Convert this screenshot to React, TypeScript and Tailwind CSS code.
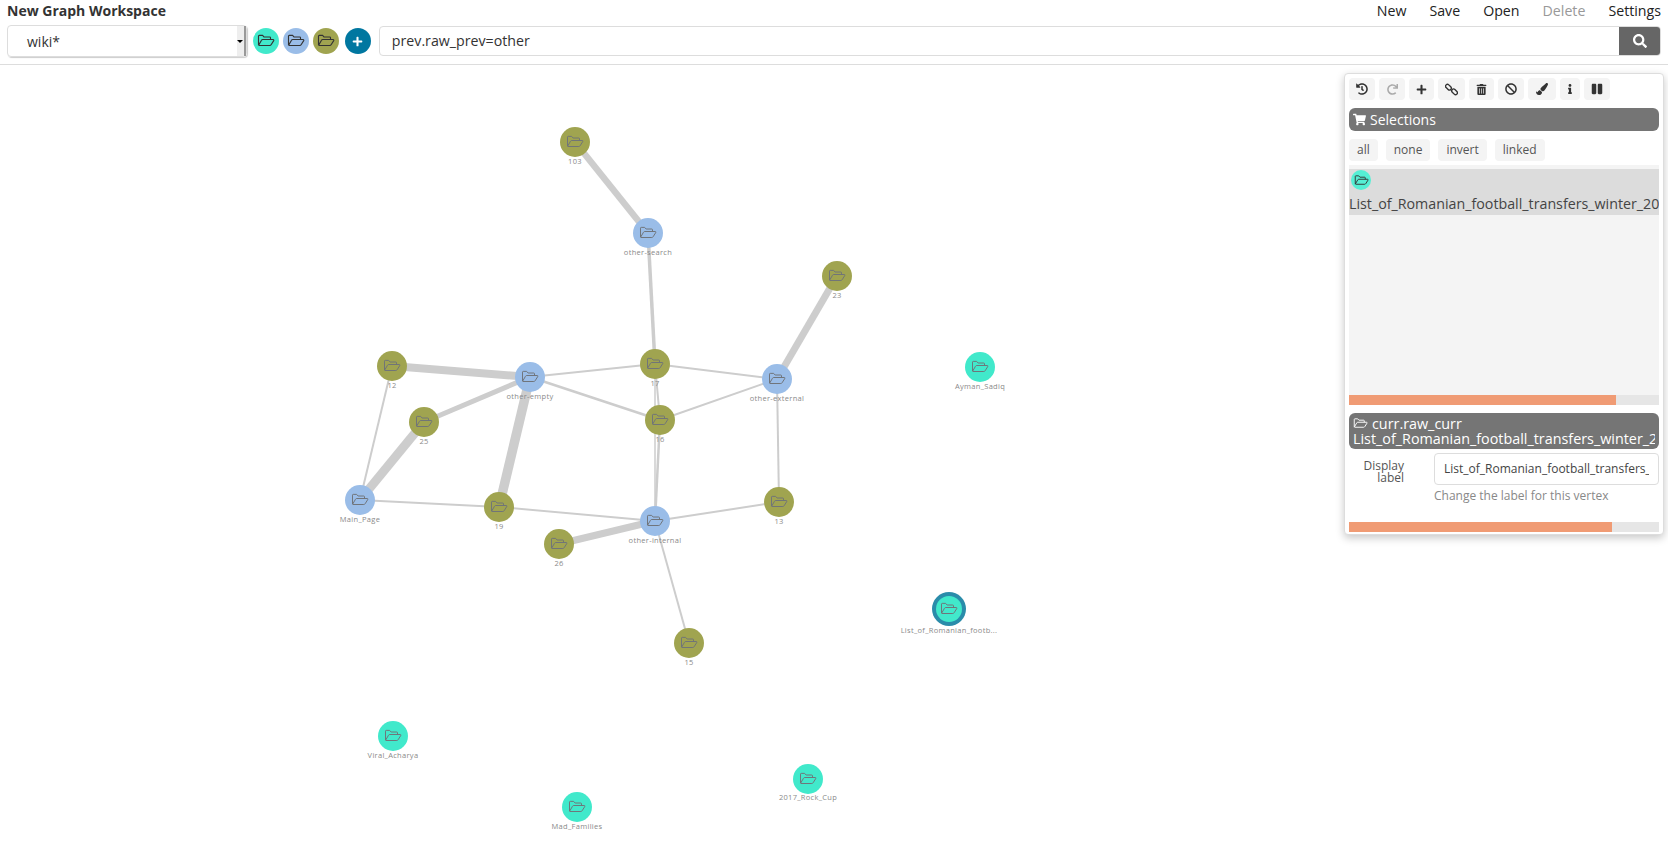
import {
  FaBan,
  FaHistory,
  FaInfo,
  FaPaintBrush,
  FaPause,
  FaPlus,
  FaRedo,
  FaSearch,
  FaShoppingCart,
  FaTrashAlt,
} from "react-icons/fa";

const TURQUOISE = "#41e9cb";
const BLUE = "#9abde8";
const OLIVE = "#a0a450";

type Node = { id: string; x: number; y: number; color: string; label: string; labelY?: number };

const nodes: Node[] = [
  { id: "103", x: 575, y: 142, color: OLIVE, label: "103" },
  { id: "search", x: 648, y: 233, color: BLUE, label: "other-search" },
  { id: "23", x: 837, y: 276, color: OLIVE, label: "23" },
  { id: "12", x: 392, y: 366, color: OLIVE, label: "12" },
  { id: "empty", x: 530, y: 377, color: BLUE, label: "other-empty" },
  { id: "17", x: 655, y: 364, color: OLIVE, label: "17" },
  { id: "external", x: 777, y: 379, color: BLUE, label: "other-external" },
  { id: "16", x: 660, y: 420, color: OLIVE, label: "16" },
  { id: "25", x: 424, y: 422, color: OLIVE, label: "25" },
  { id: "main", x: 360, y: 500, color: BLUE, label: "Main_Page" },
  { id: "19", x: 499, y: 507, color: OLIVE, label: "19" },
  { id: "internal", x: 655, y: 521, color: BLUE, label: "other-internal" },
  { id: "13", x: 779, y: 502, color: OLIVE, label: "13" },
  { id: "26", x: 559, y: 544, color: OLIVE, label: "26" },
  { id: "15", x: 689, y: 643, color: OLIVE, label: "15" },
  { id: "ayman", x: 980, y: 367, color: TURQUOISE, label: "Ayman_Sadiq" },
  { id: "list", x: 949, y: 609, color: TURQUOISE, label: "List_of_Romanian_footb...", labelY: 24 },
  { id: "viral", x: 393, y: 736, color: TURQUOISE, label: "Viral_Acharya" },
  { id: "rock", x: 808, y: 779, color: TURQUOISE, label: "2017_Rock_Cup", labelY: 21 },
  { id: "mad", x: 577, y: 807, color: TURQUOISE, label: "Mad_Families" },
];

const edges: [string, string, number][] = [
  ["103", "search", 6.5],
  ["search", "17", 3.5],
  ["23", "external", 7],
  ["12", "empty", 8],
  ["12", "main", 2],
  ["empty", "25", 5],
  ["25", "main", 9],
  ["empty", "19", 9.5],
  ["empty", "17", 2],
  ["empty", "16", 2.5],
  ["17", "16", 2],
  ["17", "external", 2],
  ["16", "external", 2],
  ["16", "internal", 2.5],
  ["17", "internal", 1.5],
  ["external", "13", 2],
  ["main", "19", 2],
  ["19", "internal", 2],
  ["internal", "13", 2],
  ["26", "internal", 7],
  ["internal", "15", 2],
];

const nodeById = Object.fromEntries(nodes.map((n) => [n.id, n]));

// outline folder, same shape as the font-awesome 4 folder-open-o
function FolderPaths({ color, stroke = 1.5 }: { color: string; stroke?: number }) {
  return (
    <g fill="none" stroke={color} strokeWidth={stroke} strokeLinejoin="round">
      <path d="M2 17.5V5.5a1 1 0 0 1 1-1h4.500l2 2.200H17a1 1 0 0 1 1 1V10" />
      <path d="M2 17.800 6 11a1.800 1.800 0 0 1 1.500-1H21.500a1 1 0 0 1 .8 1.500L18.800 17a2 2 0 0 1-1.700 1H2.500" />
    </g>
  );
}

function FolderIcon({ size, color, className }: { size: number; color: string; className?: string }) {
  return (
    <svg width={size} height={size} viewBox="0 0 24 24" className={className}>
      <FolderPaths color={color} />
    </svg>
  );
}

function ChainIcon() {
  return (
    <svg width="13" height="13" viewBox="0 0 14 14" fill="none" stroke="#333" strokeWidth="1.5">
      <rect x="0.200" y="2.500" width="7" height="4" rx="2" transform="rotate(45 3.700 4.500)" />
      <rect x="6.800" y="7.500" width="7" height="4" rx="2" transform="rotate(45 10.300 9.500)" />
    </svg>
  );
}

function TypeButton({ color }: { color: string }) {
  return (
    <div
      className="flex h-[26px] w-[26px] items-center justify-center rounded-full"
      style={{ backgroundColor: color }}
    >
      <FolderIcon size={18} color="#333" />
    </div>
  );
}

function ToolButton({ width, disabled, children }: { width: string; disabled?: boolean; children: React.ReactNode }) {
  return (
    <div
      className={`flex h-[22px] items-center justify-center rounded bg-[#f4f4f4] text-[12px] ${width} ${
        disabled ? "text-[#aaa]" : "text-[#333]"
      }`}
    >
      {children}
    </div>
  );
}

function Chip({ children }: { children: React.ReactNode }) {
  return <div className="flex h-[22px] items-center rounded bg-[#f4f4f4] px-2 text-[12px] text-[#555]">{children}</div>;
}

function Graph() {
  return (
    <svg className="absolute inset-0 h-full w-full" viewBox="0 65 1668 792">
      {edges.map(([a, b, w]) => (
        <line
          key={a + b}
          x1={nodeById[a].x}
          y1={nodeById[a].y}
          x2={nodeById[b].x}
          y2={nodeById[b].y}
          stroke="#cdcdcd"
          strokeWidth={w}
        />
      ))}
      {nodes.map((n) => (
        <g key={n.id}>
          {n.id === "list" && <circle cx={n.x} cy={n.y} r={17} fill="#2a8caa" />}
          <circle cx={n.x} cy={n.y} r={n.id === "list" ? 13 : 15} fill={n.color} />
          <svg x={n.x - 9} y={n.y - 9} width={18} height={18} viewBox="0 0 24 24">
            <FolderPaths color="#6f7378" stroke={1.3} />
          </svg>
          <text
            x={n.x}
            y={n.y + (n.labelY ?? 22)}
            textAnchor="middle"
            fontSize="7.500"
            letterSpacing="0.3"
            fill="#8a8a8a"
            fontFamily="Open Sans, sans-serif"
          >
            {n.label}
          </text>
        </g>
      ))}
    </svg>
  );
}

function Panel() {
  return (
    <div className="absolute left-[1344px] top-[8px] flex h-[462px] w-[320px] flex-col rounded border border-[#ddd] bg-white px-[4px] pt-[4px] shadow-[0_3px_8px_rgba(0,0,0,0.22)]">
      <div className="flex gap-1">
        <ToolButton width="w-[26px]"><FaHistory /></ToolButton>
        <ToolButton width="w-[26px]" disabled><FaRedo size={11} /></ToolButton>
        <ToolButton width="w-[25px]"><FaPlus size={11} /></ToolButton>
        <ToolButton width="w-[27px]"><ChainIcon /></ToolButton>
        <ToolButton width="w-[25px]"><FaTrashAlt size={11} /></ToolButton>
        <ToolButton width="w-[26px]"><FaBan /></ToolButton>
        <ToolButton width="w-[28px]"><FaPaintBrush /></ToolButton>
        <ToolButton width="w-[20px]"><FaInfo size={10} /></ToolButton>
        <ToolButton width="w-[26px]"><FaPause /></ToolButton>
      </div>
      <div className="mt-2 flex h-[23px] w-[310px] items-center gap-1 rounded-md bg-[#757575] px-1 text-[14px] text-white">
        <FaShoppingCart size={13} />
        <span>Selections</span>
      </div>
      <div className="mt-2 flex gap-2">
        <Chip>all</Chip>
        <Chip>none</Chip>
        <Chip>invert</Chip>
        <Chip>linked</Chip>
      </div>
      <div className="mt-1 h-[230px] w-[310px] overflow-hidden bg-[#f4f4f4] pt-1">
        <div className="h-[46px] overflow-hidden bg-[#dcdcdc]">
          <div className="ml-[2px] flex h-[20px] w-[20px] translate-y-[1px] items-center justify-center rounded-full bg-[#55efd4]">
            <FolderIcon size={15} color="#333" />
          </div>
          <div className="mt-[5px] overflow-hidden whitespace-nowrap text-[14.25px] leading-5 text-[#444]">
            List_of_Romanian_football_transfers_winter_2016
          </div>
        </div>
      </div>
      <div className="h-[10px] w-[310px] bg-[#e6e6e6]">
        <div className="h-full bg-[#f09b74]" style={{ width: "267px" }} />
      </div>
      <div className="mt-2 h-[36px] w-[310px] overflow-hidden rounded-md bg-[#757575] px-1 text-[14.35px] leading-[15px] text-white">
        <div className="flex items-center gap-1 pt-[3px]">
          <FolderIcon size={15} color="#fff" />
          <span>curr.raw_curr</span>
        </div>
        <div className="overflow-hidden whitespace-nowrap">List_of_Romanian_football_transfers_winter_2016</div>
      </div>
      <div className="mt-1 flex w-[310px]">
        <div className="w-[85px] pr-[30px] pt-[7px] text-right text-[12px] leading-3 text-[#555]">Display label</div>
        <div className="flex-1">
          <div className="flex h-[32px] items-center overflow-hidden whitespace-nowrap rounded border border-[#ddd] px-[9px] text-[12px] text-[#444]">
            <span className="w-[205px] overflow-hidden">List_of_Romanian_football_transfers_winter_2016</span>
          </div>
          <div className="mt-[2px] text-[12px] text-[#888]">Change the label for this vertex</div>
        </div>
      </div>
      <div className="mt-[17px] h-[10px] w-[310px] bg-[#e6e6e6]">
        <div className="h-full bg-[#f09b74]" style={{ width: "263px" }} />
      </div>
    </div>
  );
}

export default function App() {
  return (
    <div className="flex h-[857px] w-[1668px] flex-col overflow-hidden bg-white font-['Open_Sans',sans-serif] text-[#333]">
      <div className="h-[65px] border-b border-[#ddd] px-[7px]">
        <div className="flex h-[25px] items-start justify-between">
          <div className="pt-[1px] text-[14px] font-bold leading-5 text-[#333]">New Graph Workspace</div>
          <div className="flex gap-[23px] pt-[1px] text-[14.2px] leading-5 text-[#222]">
            <span>New</span>
            <span>Save</span>
            <span>Open</span>
            <span className="text-[#999]">Delete</span>
            <span>Settings</span>
          </div>
        </div>
        <div className="flex items-center">
          <div className="flex h-[32px] w-[240px] items-center justify-between rounded border border-[#ddd] pl-[19px] text-[14px] shadow-[1px_1px_1px_rgba(0,0,0,0.2)]">
            <span>wiki*</span>
            <div className="flex h-full w-[9px] items-center justify-center border-r-2 border-[#999] bg-[#eee]">
              <div className="h-0 w-0 border-x-[3px] border-t-[3px] border-x-transparent border-t-black" />
            </div>
          </div>
          <div className="ml-[6px] flex gap-[4px]">
            <TypeButton color={TURQUOISE} />
            <TypeButton color={BLUE} />
            <TypeButton color={OLIVE} />
          </div>
          <div className="ml-[6px] flex h-[26px] w-[26px] items-center justify-center rounded-full bg-[#0077a0] text-white">
            <FaPlus size={11} />
          </div>
          <div className="ml-[8px] flex h-[30px] w-[1283px] overflow-hidden rounded border border-[#ddd]">
            <div className="flex flex-1 items-center px-[12px] text-[14.2px]">prev.raw_prev=other</div>
            <div className="flex w-[41px] items-center justify-center bg-[#666] text-white">
              <FaSearch size={14} />
            </div>
          </div>
        </div>
      </div>
      <div className="relative flex-1">
        <Graph />
        <Panel />
      </div>
    </div>
  );
}
